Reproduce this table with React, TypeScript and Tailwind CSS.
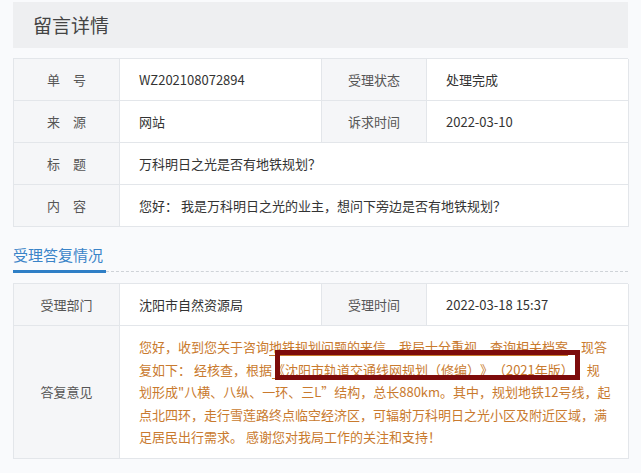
import React from 'react'

const font = { fontFamily: '"Noto Sans CJK SC", "Noto Sans", sans-serif' }

function Label({ children, tall }: { children: React.ReactNode; tall?: boolean }) {
  return (
    <div className={`flex items-center justify-center bg-[#f5f6f8] border-r border-b border-[#e3e6ea] text-[13px] text-[#555] ${tall ? '' : 'h-[42px]'}`}>
      {children}
    </div>
  )
}

function Value({ children, span }: { children: React.ReactNode; span?: boolean }) {
  return (
    <div className={`flex items-center h-[42px] pl-[19px] bg-white border-r border-b border-[#e3e6ea] text-[13px] text-[#333] ${span ? 'col-span-3' : ''}`}>
      {children}
    </div>
  )
}

export default function App() {
  const u = 'underline decoration-[#c97a2e] underline-offset-[3px]'
  return (
    <div className="w-[641px] h-[473px] overflow-hidden bg-[#f9fafc] px-[13px] pt-[2px] [text-spacing-trim:space-all]" style={font}>
      {/* Header */}
      <div className="h-[46px] bg-[#eeeff1] flex items-center pl-[20px] text-[19px] text-[#444]">留言详情</div>

      {/* 留言信息 */}
      <div className="mt-[10px] grid grid-cols-[106px_202px_105px_202px] border-t border-l border-[#e3e6ea]">
        <Label>单　号</Label>
        <Value>WZ202108072894</Value>
        <Label>受理状态</Label>
        <Value>处理完成</Value>
        <Label>来　源</Label>
        <Value>网站</Value>
        <Label>诉求时间</Label>
        <Value>2022-03-10</Value>
        <Label>标　题</Label>
        <Value span>万科明日之光是否有地铁规划？</Value>
        <Label>内　容</Label>
        <Value span>您好： 我是万科明日之光的业主，想问下旁边是否有地铁规划？</Value>
      </div>

      {/* 受理答复情况 */}
      <div className="mt-[18px] text-[15px] leading-[20px] text-[#3a84c8]">受理答复情况</div>
      <div className="mt-[5px] flex items-center">
        <div className="w-[93px] h-[3px] bg-[#2f7fc6]" />
        <div className="flex-1 border-b border-dashed border-[#cfd3d8]" />
      </div>

      <div className="mt-[10px] grid grid-cols-[106px_202px_105px_202px] border-t border-l border-[#e3e6ea]">
        <Label>受理部门</Label>
        <Value>沈阳市自然资源局</Value>
        <Label>受理时间</Label>
        <Value>2022-03-18 15:37</Value>
        <Label tall>答复意见</Label>
        <div className="col-span-3 relative bg-white border-r border-b border-[#e3e6ea] pl-[19px] pt-[10px] pb-[9px] text-[13px] leading-[22.5px] text-[#c97a2e] whitespace-nowrap">
          <div>您好，收到您关于咨询<span className={u}>地铁规划问题的来信，我局十分重视，查询相关档案</span>，现答</div>
          <div>复如下： 经核查，根据<span className={u}>《沈阳市轨道交通线网规划（修编）》（2021年版）</span>，规</div>
          <div>划形成"八横、八纵、一环、三L”结构，总长880km。其中，规划地铁12号线，起</div>
          <div>点北四环，走行雪莲路终点临空经济区，可辐射万科明日之光小区及附近区域，满</div>
          <div>足居民出行需求。 感谢您对我局工作的关注和支持！</div>
          {/* annotation box */}
          <div className="absolute left-[155px] top-[24px] w-[305px] h-[30px] border-[5px] border-[#7d0b0b]" />
        </div>
      </div>
    </div>
  )
}
